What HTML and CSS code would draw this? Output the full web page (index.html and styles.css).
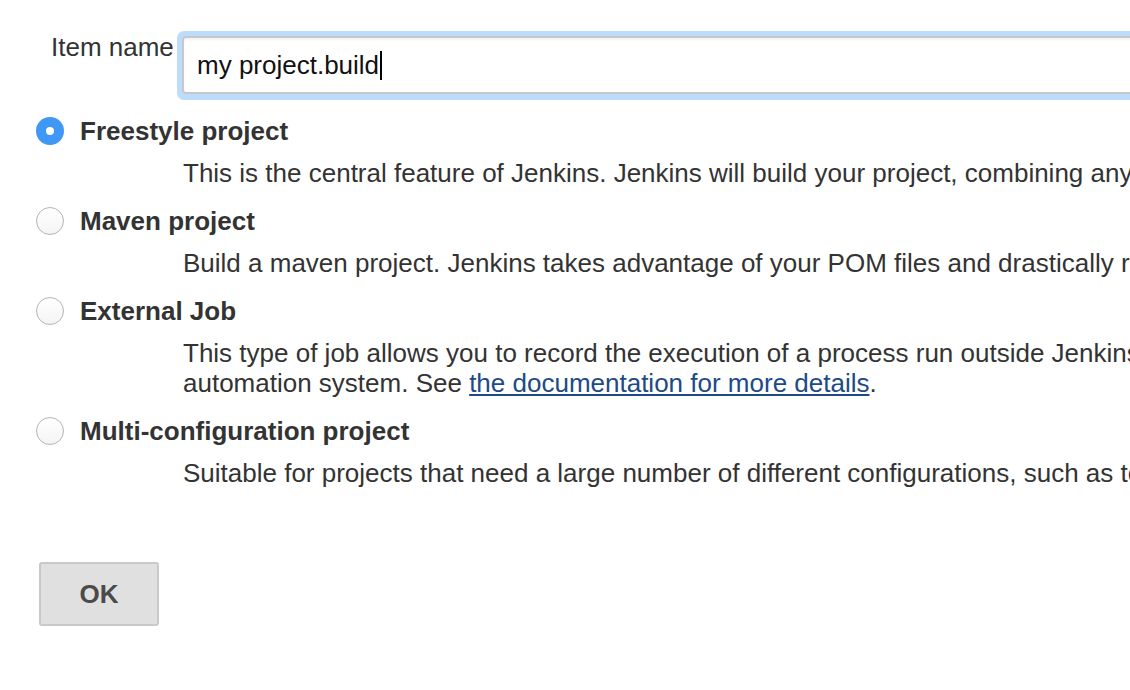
FILE: index.html
```html
<!DOCTYPE html>
<html>
<head>
<meta charset="utf-8">
<link rel="stylesheet" href="styles.css">
</head>
<body>
<div class="page">
  <div class="name-row">
    <label class="name-label">Item name</label>
    <div class="focus-ring">
      <div class="text-input">my project.build<span class="caret"></span></div>
    </div>
  </div>

  <div class="options">
    <div class="option">
      <div class="option-head"><span class="radio checked"></span><span class="option-title">Freestyle project</span></div>
      <div class="option-desc">This is the central feature of Jenkins. Jenkins will build your project, combining any SCM with any build system, and this can be even used for something other than software build.</div>
    </div>
    <div class="option">
      <div class="option-head"><span class="radio"></span><span class="option-title">Maven project</span></div>
      <div class="option-desc">Build a maven project. Jenkins takes advantage of your POM files and drastically reduces the configuration.</div>
    </div>
    <div class="option">
      <div class="option-head"><span class="radio"></span><span class="option-title">External Job</span></div>
      <div class="option-desc">This type of job allows you to record the execution of a process run outside Jenkins, even on a remote machine. This is designed so that you can use Jenkins as a dashboard of your existing<br>automation system. See <a href="#" class="doc-link">the documentation for more details</a>.</div>
    </div>
    <div class="option">
      <div class="option-head"><span class="radio"></span><span class="option-title">Multi-configuration project</span></div>
      <div class="option-desc">Suitable for projects that need a large number of different configurations, such as testing on multiple environments, platform-specific builds, etc.</div>
    </div>
  </div>

  <div class="actions">
    <button class="ok-button">OK</button>
  </div>
</div>
</body>
</html>
```
FILE: styles.css
```css
html, body {
  margin: 0;
  padding: 0;
  overflow: hidden;
  background: #ffffff;
}

body {
  font-family: "Liberation Sans", Arial, sans-serif;
  font-size: 26px;
  line-height: 30px;
  color: #333333;
  width: 1130px;
  height: 690px;
}

.page {
  padding-top: 31px;
}

.name-row {
  display: flex;
  align-items: flex-start;
  padding-left: 51px;
}

.name-label {
  width: 121px;
  margin-top: 1px;
  margin-right: 5px;
  white-space: nowrap;
  color: #333;
}

.focus-ring {
  background: #bddcfb;
  padding: 5px 5px 6px 5px;
  border-radius: 7px;
  flex: none;
}

.text-input {
  box-sizing: border-box;
  width: 1100px;
  height: 58px;
  border: 2px solid #c8c8c8;
  border-radius: 4px;
  background: #ffffff;
  box-shadow: inset 0 2px 2px rgba(0, 0, 0, 0.05);
  padding-left: 13px;
  display: flex;
  align-items: center;
  color: #111111;
  white-space: nowrap;
}

.caret {
  display: inline-block;
  width: 2px;
  height: 29px;
  background: #000;
  margin-left: 1px;
}

.options {
  margin-top: 16px;
}

.option {
  margin-bottom: 18px;
}

.option-head {
  display: flex;
  align-items: center;
  padding-left: 36px;
}

.radio {
  box-sizing: border-box;
  width: 28px;
  height: 28px;
  border-radius: 50%;
  border: 1.5px solid #b4b4b4;
  background: linear-gradient(#ffffff, #f4f4f4);
  margin-right: 16px;
  flex: none;
  position: relative;
}

.radio.checked {
  border: none;
  background: #3f97f6;
}

.radio.checked::after {
  content: "";
  position: absolute;
  left: 10px;
  top: 10px;
  width: 8px;
  height: 8px;
  border-radius: 50%;
  background: #ffffff;
}

.option-title {
  font-weight: bold;
  color: #333;
  white-space: nowrap;
}

.option-desc {
  margin-top: 12px;
  padding-left: 183px;
  white-space: nowrap;
}

.doc-link {
  color: #204a87;
  text-decoration: underline;
}

.actions {
  margin-top: 74px;
  padding-left: 39px;
}

.ok-button {
  box-sizing: border-box;
  width: 120px;
  height: 64px;
  border: 2px solid #c9c9c9;
  border-radius: 3px;
  background: #e0e0e0;
  font-family: "Liberation Sans", Arial, sans-serif;
  font-size: 26px;
  font-weight: bold;
  color: #4a4a4a;
  padding: 0;
}
```
